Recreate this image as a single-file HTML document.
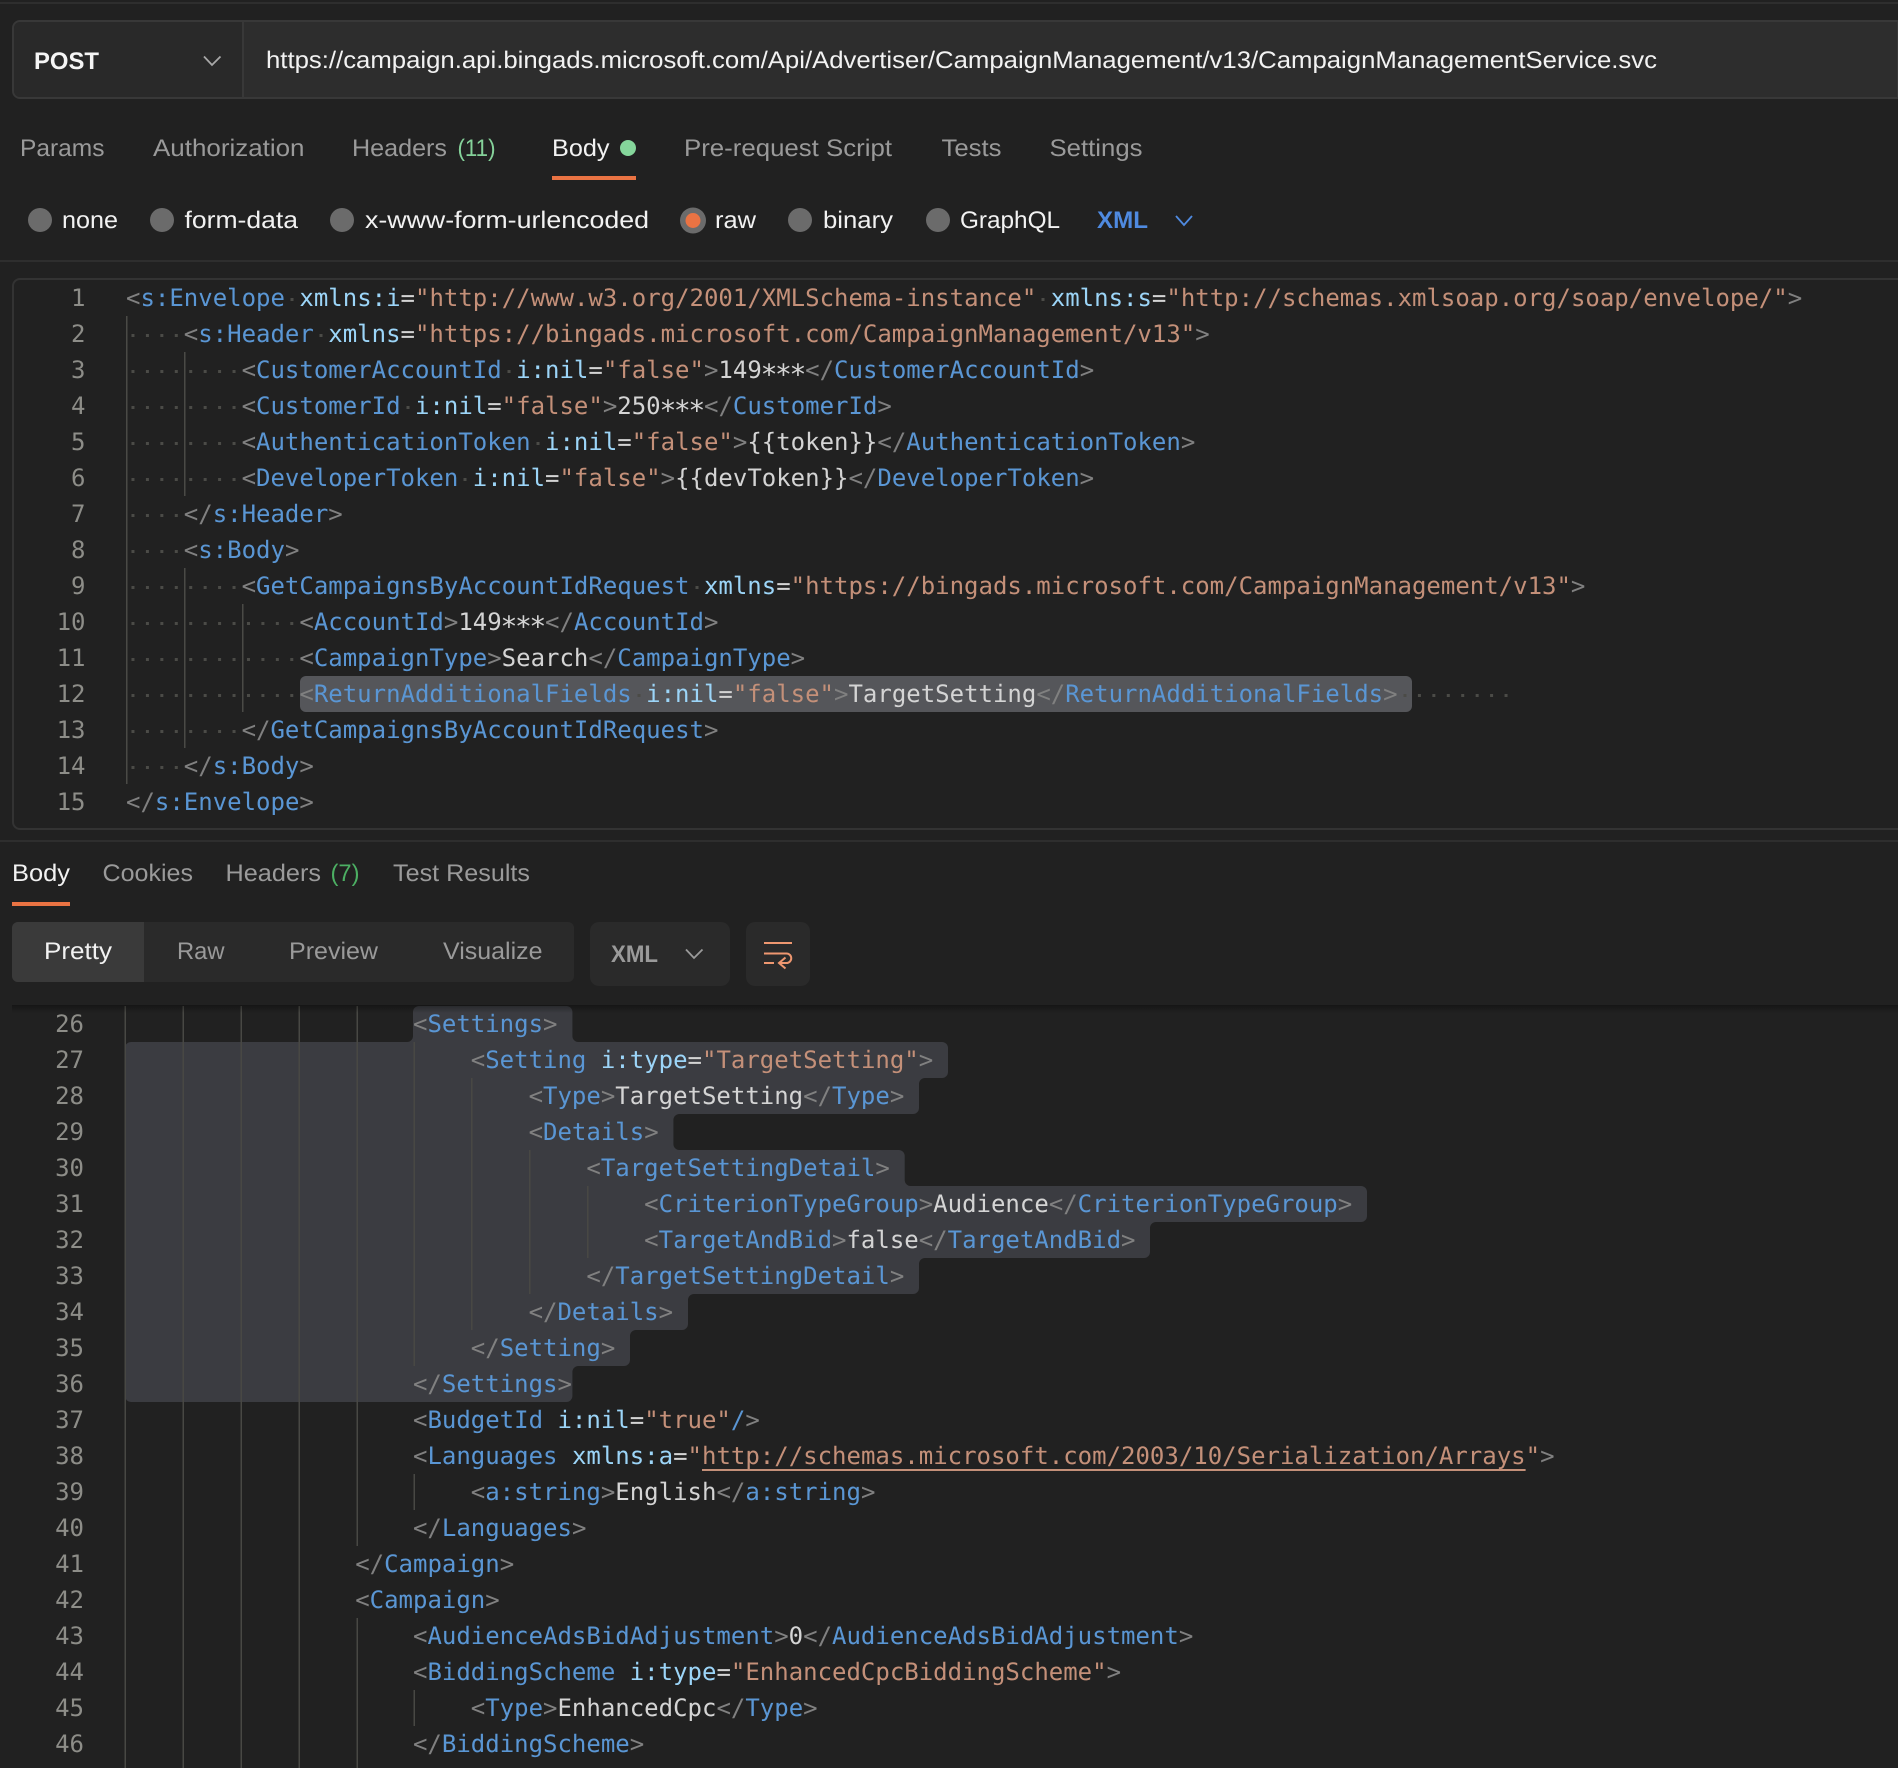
<!DOCTYPE html>
<html lang="en"><head><meta charset="utf-8"><title>POST request</title>
<style>
html,body{margin:0;padding:0;background:#212121}
body{position:relative;width:1898px;height:1768px;overflow:hidden}
#ui{position:absolute;left:0;top:0}
#ui text{font-family:"Liberation Sans",sans-serif;font-size:24px;text-rendering:geometricPrecision}
.g{fill:#9a9a9a}.w{fill:#f2f2f2}
.c{position:absolute;font:24px/36px "DejaVu Sans Mono",monospace;white-space:pre;color:#d4d4d4;text-rendering:geometricPrecision;font-variant-ligatures:none;height:36px}
.n{position:absolute;font:24px/36px "DejaVu Sans Mono",monospace;color:#8d8d88;text-align:right;width:60px;text-rendering:geometricPrecision;height:36px}
.up .c{left:126px}.up .n{left:25.5px}
.lo .c{left:124px}.lo .n{left:24px}
.t{color:#5a96d4}.b{color:#808080}.a{color:#9cd5f8}.v{color:#c49079}
.u{text-decoration:underline;text-decoration-thickness:2px;text-underline-offset:5px}
.s{font-size:28px;letter-spacing:-2.408px;position:relative;top:6px;left:-1.2px;line-height:0}
i{display:inline-block;height:3px;vertical-align:middle;background-image:linear-gradient(90deg,transparent 5.7px,#4b4b47 5.7px,#4b4b47 8.4px,transparent 8.4px);background-size:14.448px 3px;background-repeat:repeat-x}
.d1{width:14.448px}.d4{width:57.792px}.d8{width:115.584px}.d12{width:173.376px}
</style></head><body>

<svg id="ui" width="1898" height="1768" viewBox="0 0 1898 1768" xmlns="http://www.w3.org/2000/svg">
<rect x="0" y="2" width="1898" height="2" fill="#2e2e2e"/>
<!-- URL bar -->
<path d="M1898 21H20a7 7 0 0 0-7 7v63a7 7 0 0 0 7 7H1898Z" fill="#2d2d2d" stroke="#383838" stroke-width="2"/>
<path d="M243 22H20a6 6 0 0 0-6 6v63a6 6 0 0 0 6 6H243Z" fill="#292929"/>
<rect x="242" y="21" width="2" height="78" fill="#383838"/>
<text x="34" y="69" font-weight="700" fill="#f5f5f5" textLength="65" lengthAdjust="spacingAndGlyphs">POST</text>
<path d="M204 56.500L212 65L220.500 56.500" fill="none" stroke="#a8a8a8" stroke-width="1.800"/>
<text x="266" y="68" fill="#f2f2f2" textLength="1391" lengthAdjust="spacingAndGlyphs">https://campaign.api.bingads.microsoft.com/Api/Advertiser/CampaignManagement/v13/CampaignManagementService.svc</text>
<!-- request tabs -->
<text class="g" x="20" y="156" textLength="84.500" lengthAdjust="spacingAndGlyphs">Params</text>
<text class="g" x="153" y="156" textLength="151.500" lengthAdjust="spacingAndGlyphs">Authorization</text>
<text class="g" x="352" y="156" textLength="95" lengthAdjust="spacingAndGlyphs">Headers</text>
<text x="457.500" y="156" fill="#85d29a" textLength="38" lengthAdjust="spacingAndGlyphs">(11)</text>
<text class="w" x="552" y="156" textLength="57.500" lengthAdjust="spacingAndGlyphs">Body</text>
<circle cx="628" cy="148" r="8" fill="#85d69b"/>
<text class="g" x="684" y="156" textLength="208" lengthAdjust="spacingAndGlyphs">Pre-request Script</text>
<text class="g" x="941.500" y="156" textLength="60" lengthAdjust="spacingAndGlyphs">Tests</text>
<text class="g" x="1049.500" y="156" textLength="93" lengthAdjust="spacingAndGlyphs">Settings</text>
<rect x="552" y="176" width="84" height="4" fill="#ea7343"/>
<!-- radios -->
<circle cx="40" cy="220" r="12" fill="#6b6b6b"/>
<text class="w" x="62" y="228" textLength="56" lengthAdjust="spacingAndGlyphs">none</text>
<circle cx="162" cy="220" r="12" fill="#6b6b6b"/>
<text class="w" x="184.500" y="228" textLength="113.500" lengthAdjust="spacingAndGlyphs">form-data</text>
<circle cx="342" cy="220" r="12" fill="#6b6b6b"/>
<text class="w" x="365" y="228" textLength="284" lengthAdjust="spacingAndGlyphs">x-www-form-urlencoded</text>
<circle cx="693" cy="220.500" r="13" fill="#6b6b6b"/><circle cx="693" cy="220.500" r="7.500" fill="#ea7343"/>
<text class="w" x="715" y="228" textLength="41" lengthAdjust="spacingAndGlyphs">raw</text>
<circle cx="800" cy="220" r="12" fill="#6b6b6b"/>
<text class="w" x="823" y="228" textLength="70" lengthAdjust="spacingAndGlyphs">binary</text>
<circle cx="938" cy="220" r="12" fill="#6b6b6b"/>
<text class="w" x="960" y="228" textLength="100" lengthAdjust="spacingAndGlyphs">GraphQL</text>
<text x="1097" y="228" font-weight="700" fill="#4f8ae0" textLength="51" lengthAdjust="spacingAndGlyphs">XML</text>
<path d="M1176 216L1184 225L1192 216" fill="none" stroke="#4f8ae0" stroke-width="1.800"/>
<rect x="0" y="260" width="1898" height="2" fill="#2e2e2e"/>
<!-- editor frame -->
<path d="M1898 279H20a7 7 0 0 0-7 7V822a7 7 0 0 0 7 7H1898" fill="none" stroke="#333333" stroke-width="2"/>
<rect x="0" y="840" width="1898" height="2" fill="#2e2e2e"/>
<!-- request guides -->
<g fill="#4a4a46">
<rect x="126" y="316" width="1.500" height="468"/>
<rect x="184" y="352" width="1.500" height="144"/>
<rect x="184" y="568" width="1.500" height="180"/>
<rect x="242" y="604" width="1.500" height="108"/>
</g>
<rect x="300" y="676" width="1112" height="36" rx="6" fill="#55565a"/>
<!-- response tabs -->
<text class="w" x="12" y="881" textLength="58" lengthAdjust="spacingAndGlyphs">Body</text>
<text class="g" x="102.500" y="881" textLength="90.500" lengthAdjust="spacingAndGlyphs">Cookies</text>
<text class="g" x="225.500" y="881" textLength="95.500" lengthAdjust="spacingAndGlyphs">Headers</text>
<text x="330.500" y="881" fill="#4caf63" textLength="29" lengthAdjust="spacingAndGlyphs">(7)</text>
<text class="g" x="393" y="881" textLength="137" lengthAdjust="spacingAndGlyphs">Test Results</text>
<rect x="12" y="902" width="58" height="4" fill="#ea7343"/>
<!-- segmented -->
<rect x="12" y="922" width="562" height="60" rx="6" fill="#2a2a2a"/>
<path d="M144 922H18a6 6 0 0 0-6 6v48a6 6 0 0 0 6 6H144Z" fill="#3a3a3a"/>
<text class="w" x="44" y="959" textLength="68" lengthAdjust="spacingAndGlyphs">Pretty</text>
<text class="g" x="177" y="959" textLength="47.500" lengthAdjust="spacingAndGlyphs">Raw</text>
<text class="g" x="289" y="959" textLength="89" lengthAdjust="spacingAndGlyphs">Preview</text>
<text class="g" x="443" y="959" textLength="99.500" lengthAdjust="spacingAndGlyphs">Visualize</text>
<rect x="590" y="922" width="140" height="64" rx="9" fill="#2a2a2a"/>
<text x="611" y="962" font-weight="700" fill="#9a9a9a" textLength="47" lengthAdjust="spacingAndGlyphs">XML</text>
<path d="M686 949.500L694 958L702.500 949.500" fill="none" stroke="#9a9a9a" stroke-width="1.800"/>
<rect x="746" y="922" width="64" height="64" rx="9" fill="#2a2a2a"/>
<path d="M764 943H792M764 953.500H786.500a4.700 4.700 0 0 1 0 9.500H779M785.500 957.500L779 963L785.500 968.500M764 963H774" fill="none" stroke="#ee9770" stroke-width="2"/>
<!-- response selection and guides -->
<path d="M419 1006H566.400a6 6 0 0 1 6 6V1036a6 6 0 0 0 6 6H942a6 6 0 0 1 6 6V1072a6 6 0 0 1-6 6H925a6 6 0 0 0-6 6V1108a6 6 0 0 1-6 6H679.400a6 6 0 0 0-6 6V1144a6 6 0 0 0 6 6H898.700a6 6 0 0 1 6 6V1180a6 6 0 0 0 6 6H1361a6 6 0 0 1 6 6V1216a6 6 0 0 1-6 6H1156a6 6 0 0 0-6 6V1252a6 6 0 0 1-6 6H925a6 6 0 0 0-6 6V1288a6 6 0 0 1-6 6H694a6 6 0 0 0-6 6V1324a6 6 0 0 1-6 6H636a6 6 0 0 0-6 6V1360a6 6 0 0 1-6 6H578.400a6 6 0 0 0-6 6V1396a6 6 0 0 1-6 6H131a6 6 0 0 1-6-6V1048a6 6 0 0 1 6-6H407a6 6 0 0 0 6-6V1012a6 6 0 0 1 6-6Z" fill="#3b3c41"/>
<g fill="#484844">
<rect x="124.500" y="1006" width="1.500" height="762"/>
<rect x="182.500" y="1006" width="1.500" height="762"/>
<rect x="240.500" y="1006" width="1.500" height="762"/>
<rect x="298.500" y="1006" width="1.500" height="762"/>
<rect x="356.500" y="1006" width="1.500" height="540"/>
<rect x="356.500" y="1618" width="1.500" height="150"/>
<rect x="413.500" y="1042" width="1.500" height="324"/>
<rect x="413.500" y="1474" width="1.500" height="36"/>
<rect x="413.500" y="1690" width="1.500" height="36"/>
<rect x="471" y="1078" width="1.500" height="252"/>
<rect x="529" y="1150" width="1.500" height="144"/>
<rect x="587" y="1186" width="1.500" height="72"/>
</g>
<defs><linearGradient id="sh" x1="0" y1="0" x2="0" y2="1"><stop offset="0" stop-color="#000" stop-opacity=".35"/><stop offset="1" stop-color="#000" stop-opacity="0"/></linearGradient></defs>
<rect x="12" y="1005" width="1886" height="8" fill="url(#sh)"/>
</svg>

<div class="up">
<div class="n" style="top:280px">1</div><div class="n" style="top:316px">2</div><div class="n" style="top:352px">3</div><div class="n" style="top:388px">4</div><div class="n" style="top:424px">5</div><div class="n" style="top:460px">6</div><div class="n" style="top:496px">7</div><div class="n" style="top:532px">8</div><div class="n" style="top:568px">9</div><div class="n" style="top:604px">10</div><div class="n" style="top:640px">11</div><div class="n" style="top:676px">12</div><div class="n" style="top:712px">13</div><div class="n" style="top:748px">14</div><div class="n" style="top:784px">15</div>
<div class="c" style="top:280px"><span class="b">&lt;</span><span class="t">s:Envelope</span><i class="d1"></i><span class="a">xmlns:i</span>=<span class="v">"http://www.w3.org/2001/XMLSchema-instance"</span><i class="d1"></i><span class="a">xmlns:s</span>=<span class="v">"http://schemas.xmlsoap.org/soap/envelope/"</span><span class="b">&gt;</span></div>
<div class="c" style="top:316px"><i class="d4"></i><span class="b">&lt;</span><span class="t">s:Header</span><i class="d1"></i><span class="a">xmlns</span>=<span class="v">"https://bingads.microsoft.com/CampaignManagement/v13"</span><span class="b">&gt;</span></div>
<div class="c" style="top:352px"><i class="d8"></i><span class="b">&lt;</span><span class="t">CustomerAccountId</span><i class="d1"></i><span class="a">i:nil</span>=<span class="v">"false"</span><span class="b">&gt;</span>149<span class="s">***</span><span class="b">&lt;/</span><span class="t">CustomerAccountId</span><span class="b">&gt;</span></div>
<div class="c" style="top:388px"><i class="d8"></i><span class="b">&lt;</span><span class="t">CustomerId</span><i class="d1"></i><span class="a">i:nil</span>=<span class="v">"false"</span><span class="b">&gt;</span>250<span class="s">***</span><span class="b">&lt;/</span><span class="t">CustomerId</span><span class="b">&gt;</span></div>
<div class="c" style="top:424px"><i class="d8"></i><span class="b">&lt;</span><span class="t">AuthenticationToken</span><i class="d1"></i><span class="a">i:nil</span>=<span class="v">"false"</span><span class="b">&gt;</span>{{token}}<span class="b">&lt;/</span><span class="t">AuthenticationToken</span><span class="b">&gt;</span></div>
<div class="c" style="top:460px"><i class="d8"></i><span class="b">&lt;</span><span class="t">DeveloperToken</span><i class="d1"></i><span class="a">i:nil</span>=<span class="v">"false"</span><span class="b">&gt;</span>{{devToken}}<span class="b">&lt;/</span><span class="t">DeveloperToken</span><span class="b">&gt;</span></div>
<div class="c" style="top:496px"><i class="d4"></i><span class="b">&lt;/</span><span class="t">s:Header</span><span class="b">&gt;</span></div>
<div class="c" style="top:532px"><i class="d4"></i><span class="b">&lt;</span><span class="t">s:Body</span><span class="b">&gt;</span></div>
<div class="c" style="top:568px"><i class="d8"></i><span class="b">&lt;</span><span class="t">GetCampaignsByAccountIdRequest</span><i class="d1"></i><span class="a">xmlns</span>=<span class="v">"https://bingads.microsoft.com/CampaignManagement/v13"</span><span class="b">&gt;</span></div>
<div class="c" style="top:604px"><i class="d12"></i><span class="b">&lt;</span><span class="t">AccountId</span><span class="b">&gt;</span>149<span class="s">***</span><span class="b">&lt;/</span><span class="t">AccountId</span><span class="b">&gt;</span></div>
<div class="c" style="top:640px"><i class="d12"></i><span class="b">&lt;</span><span class="t">CampaignType</span><span class="b">&gt;</span>Search<span class="b">&lt;/</span><span class="t">CampaignType</span><span class="b">&gt;</span></div>
<div class="c" style="top:676px"><i class="d12"></i><span class="b">&lt;</span><span class="t">ReturnAdditionalFields</span><i class="d1"></i><span class="a">i:nil</span>=<span class="v">"false"</span><span class="b">&gt;</span>TargetSetting<span class="b">&lt;/</span><span class="t">ReturnAdditionalFields</span><span class="b">&gt;</span><i class="d8"></i></div>
<div class="c" style="top:712px"><i class="d8"></i><span class="b">&lt;/</span><span class="t">GetCampaignsByAccountIdRequest</span><span class="b">&gt;</span></div>
<div class="c" style="top:748px"><i class="d4"></i><span class="b">&lt;/</span><span class="t">s:Body</span><span class="b">&gt;</span></div>
<div class="c" style="top:784px"><span class="b">&lt;/</span><span class="t">s:Envelope</span><span class="b">&gt;</span></div>
</div>

<div class="lo">
<div class="n" style="top:1006px">26</div><div class="n" style="top:1042px">27</div><div class="n" style="top:1078px">28</div><div class="n" style="top:1114px">29</div><div class="n" style="top:1150px">30</div><div class="n" style="top:1186px">31</div><div class="n" style="top:1222px">32</div><div class="n" style="top:1258px">33</div><div class="n" style="top:1294px">34</div><div class="n" style="top:1330px">35</div><div class="n" style="top:1366px">36</div><div class="n" style="top:1402px">37</div><div class="n" style="top:1438px">38</div><div class="n" style="top:1474px">39</div><div class="n" style="top:1510px">40</div><div class="n" style="top:1546px">41</div><div class="n" style="top:1582px">42</div><div class="n" style="top:1618px">43</div><div class="n" style="top:1654px">44</div><div class="n" style="top:1690px">45</div><div class="n" style="top:1726px">46</div>
<div class="c" style="top:1006px">                    <span class="b">&lt;</span><span class="t">Settings</span><span class="b">&gt;</span></div>
<div class="c" style="top:1042px">                        <span class="b">&lt;</span><span class="t">Setting</span> <span class="a">i:type</span>=<span class="v">"TargetSetting"</span><span class="b">&gt;</span></div>
<div class="c" style="top:1078px">                            <span class="b">&lt;</span><span class="t">Type</span><span class="b">&gt;</span>TargetSetting<span class="b">&lt;/</span><span class="t">Type</span><span class="b">&gt;</span></div>
<div class="c" style="top:1114px">                            <span class="b">&lt;</span><span class="t">Details</span><span class="b">&gt;</span></div>
<div class="c" style="top:1150px">                                <span class="b">&lt;</span><span class="t">TargetSettingDetail</span><span class="b">&gt;</span></div>
<div class="c" style="top:1186px">                                    <span class="b">&lt;</span><span class="t">CriterionTypeGroup</span><span class="b">&gt;</span>Audience<span class="b">&lt;/</span><span class="t">CriterionTypeGroup</span><span class="b">&gt;</span></div>
<div class="c" style="top:1222px">                                    <span class="b">&lt;</span><span class="t">TargetAndBid</span><span class="b">&gt;</span>false<span class="b">&lt;/</span><span class="t">TargetAndBid</span><span class="b">&gt;</span></div>
<div class="c" style="top:1258px">                                <span class="b">&lt;/</span><span class="t">TargetSettingDetail</span><span class="b">&gt;</span></div>
<div class="c" style="top:1294px">                            <span class="b">&lt;/</span><span class="t">Details</span><span class="b">&gt;</span></div>
<div class="c" style="top:1330px">                        <span class="b">&lt;/</span><span class="t">Setting</span><span class="b">&gt;</span></div>
<div class="c" style="top:1366px">                    <span class="b">&lt;/</span><span class="t">Settings</span><span class="b">&gt;</span></div>
<div class="c" style="top:1402px">                    <span class="b">&lt;</span><span class="t">BudgetId</span> <span class="a">i:nil</span>=<span class="v">"true"</span><span class="t">/</span><span class="b">&gt;</span></div>
<div class="c" style="top:1438px">                    <span class="b">&lt;</span><span class="t">Languages</span> <span class="a">xmlns:a</span>=<span class="v">"<span class="u">http://schemas.microsoft.com/2003/10/Serialization/Arrays</span>"</span><span class="b">&gt;</span></div>
<div class="c" style="top:1474px">                        <span class="b">&lt;</span><span class="t">a:string</span><span class="b">&gt;</span>English<span class="b">&lt;/</span><span class="t">a:string</span><span class="b">&gt;</span></div>
<div class="c" style="top:1510px">                    <span class="b">&lt;/</span><span class="t">Languages</span><span class="b">&gt;</span></div>
<div class="c" style="top:1546px">                <span class="b">&lt;/</span><span class="t">Campaign</span><span class="b">&gt;</span></div>
<div class="c" style="top:1582px">                <span class="b">&lt;</span><span class="t">Campaign</span><span class="b">&gt;</span></div>
<div class="c" style="top:1618px">                    <span class="b">&lt;</span><span class="t">AudienceAdsBidAdjustment</span><span class="b">&gt;</span>0<span class="b">&lt;/</span><span class="t">AudienceAdsBidAdjustment</span><span class="b">&gt;</span></div>
<div class="c" style="top:1654px">                    <span class="b">&lt;</span><span class="t">BiddingScheme</span> <span class="a">i:type</span>=<span class="v">"EnhancedCpcBiddingScheme"</span><span class="b">&gt;</span></div>
<div class="c" style="top:1690px">                        <span class="b">&lt;</span><span class="t">Type</span><span class="b">&gt;</span>EnhancedCpc<span class="b">&lt;/</span><span class="t">Type</span><span class="b">&gt;</span></div>
<div class="c" style="top:1726px">                    <span class="b">&lt;/</span><span class="t">BiddingScheme</span><span class="b">&gt;</span></div>
</div>
</body></html>
